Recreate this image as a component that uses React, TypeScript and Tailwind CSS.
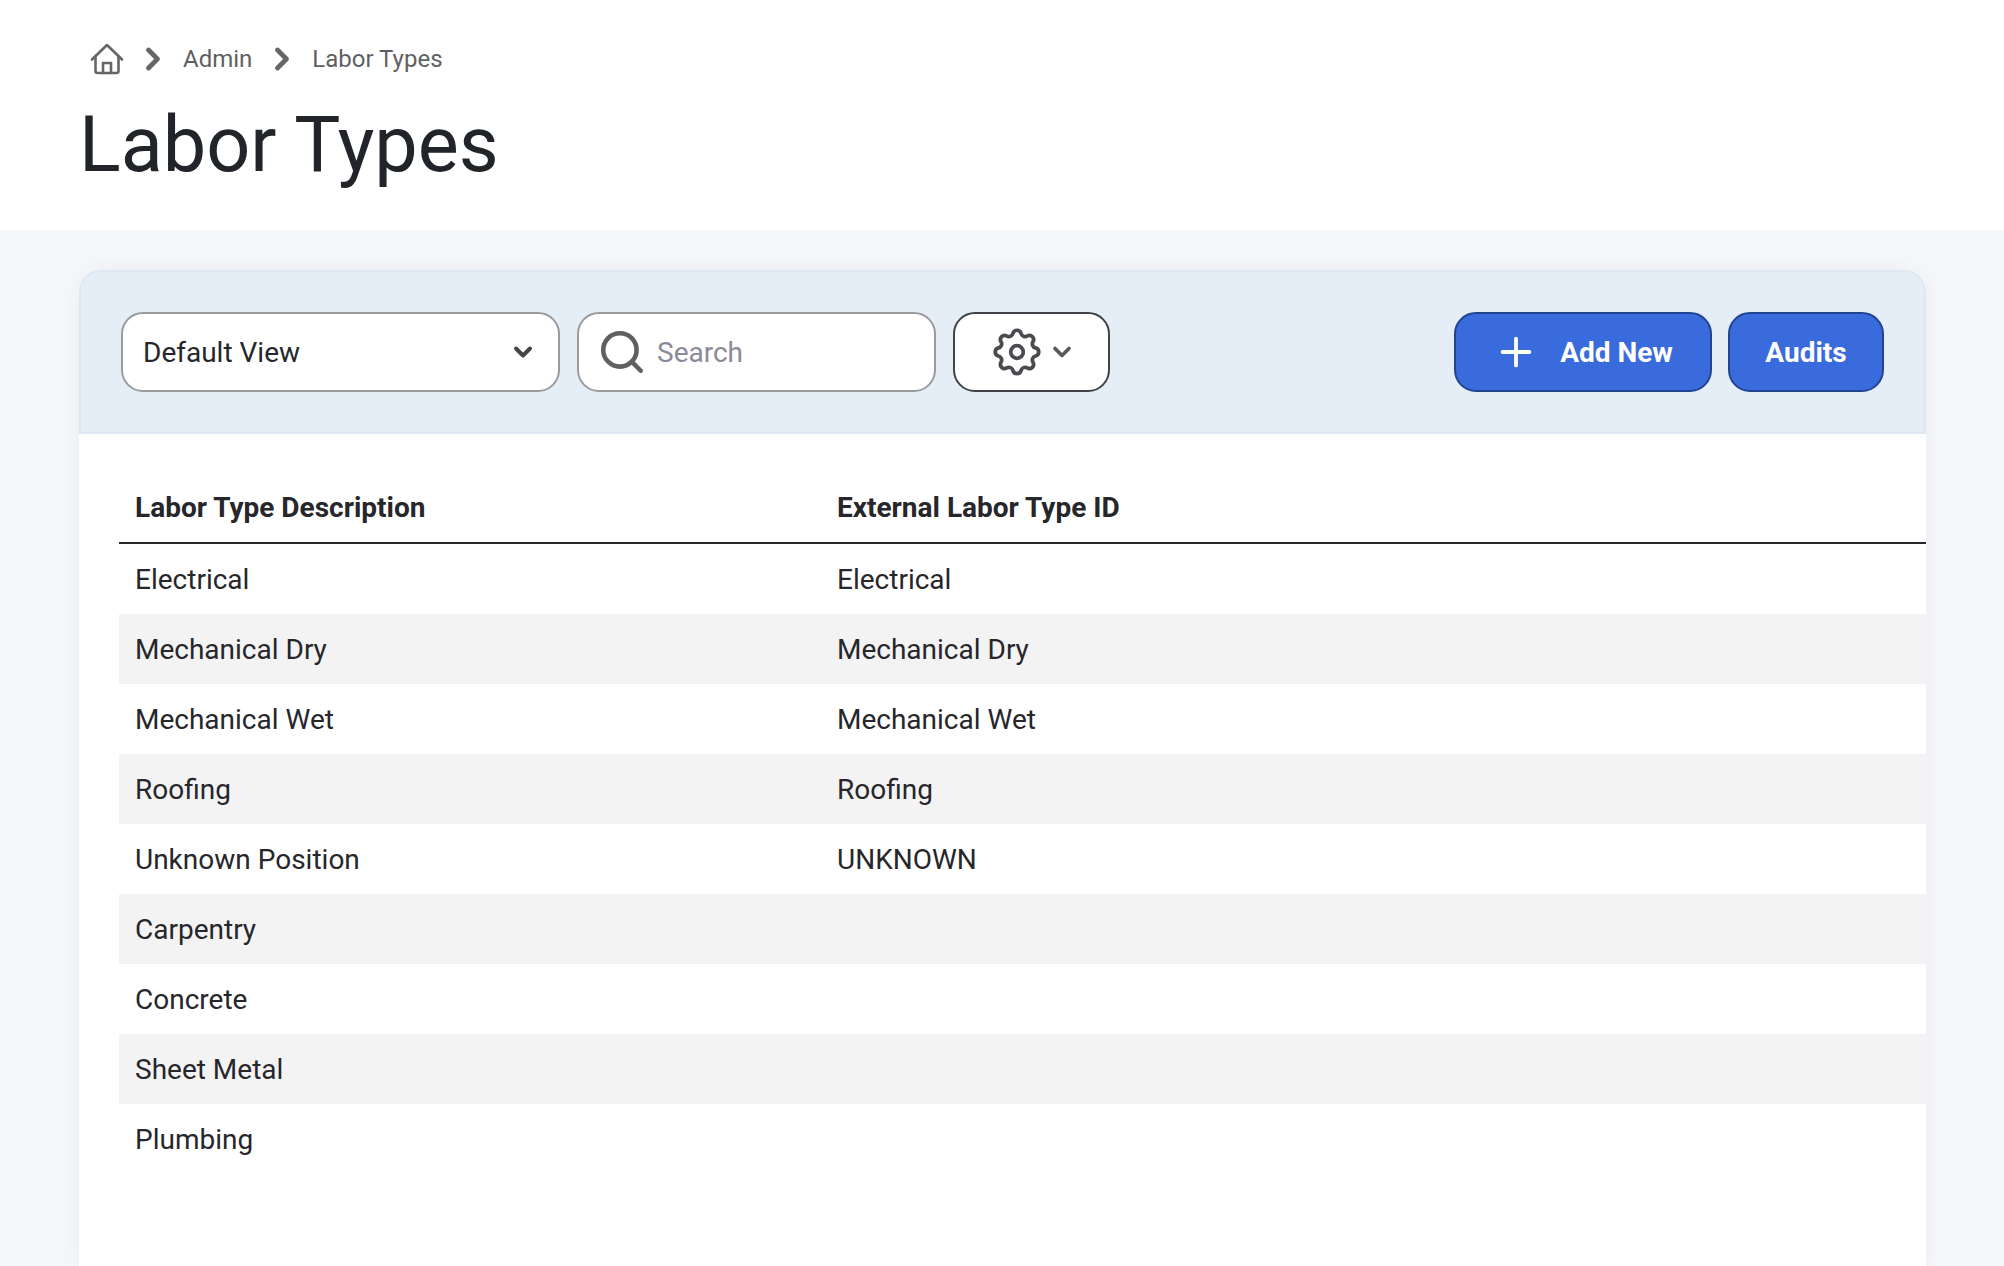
import { ChevronDown, ChevronRight, Plus, Search } from "lucide-react";

const rows = [
  ["Electrical", "Electrical"],
  ["Mechanical Dry", "Mechanical Dry"],
  ["Mechanical Wet", "Mechanical Wet"],
  ["Roofing", "Roofing"],
  ["Unknown Position", "UNKNOWN"],
  ["Carpentry", ""],
  ["Concrete", ""],
  ["Sheet Metal", ""],
  ["Plumbing", ""],
];

function HomeIcon() {
  return (
    <svg
      width="34"
      height="32"
      viewBox="0 0 34 32"
      fill="none"
      stroke="#666666"
      strokeWidth="2.6"
      strokeLinecap="round"
      strokeLinejoin="round"
    >
      <path d="M2 16.5 17 2l15 14.5" />
      <path d="M5.5 13.5V28a2 2 0 0 0 2 2h19a2 2 0 0 0 2-2V13.5" />
      <path d="M13 30V20h8v10" />
    </svg>
  );
}

function GearIcon() {
  return (
    <svg
      width="58"
      height="58"
      viewBox="0 0 24 24"
      fill="none"
      stroke="#4b4b4f"
      strokeWidth="1.55"
      strokeLinecap="round"
      strokeLinejoin="round"
    >
      <path d="M10.33 4.32c.43-1.76 2.92-1.76 3.34 0a1.72 1.72 0 0 0 2.57 1.07c1.54-.94 3.3.82 2.36 2.36a1.72 1.72 0 0 0 1.07 2.57c1.76.43 1.76 2.92 0 3.34a1.72 1.72 0 0 0-1.07 2.57c.94 1.54-.82 3.3-2.36 2.36a1.72 1.72 0 0 0-2.57 1.07c-.43 1.76-2.92 1.76-3.34 0a1.72 1.72 0 0 0-2.57-1.07c-1.54.94-3.3-.82-2.36-2.36a1.72 1.72 0 0 0-1.07-2.57c-1.76-.43-1.76-2.92 0-3.34a1.72 1.72 0 0 0 1.07-2.57c-.94-1.54.82-3.3 2.36-2.36 1 .6 2.3.07 2.57-1.07Z" />
      <circle cx="12" cy="12" r="2.6" />
    </svg>
  );
}

export default function App() {
  return (
    <div className="h-[1266px] overflow-hidden bg-[#f5f7fa] font-['Roboto',sans-serif]">
      <div className="h-[230px] bg-white pt-[38px] pl-[79px]">
        <div className="flex h-[41px] items-center pl-[11px] text-[24px] text-[#5f5f63]">
          <HomeIcon />
          <ChevronRight className="ml-[11px] size-[36px] text-[#666666]" strokeWidth={3.2} />
          <span className="ml-[12px]">Admin</span>
          <ChevronRight className="ml-[12px] size-[36px] text-[#666666]" strokeWidth={3.2} />
          <span className="ml-[12px]">Labor Types</span>
        </div>
        <h1 className="mt-[16px] text-[77.4px] leading-[100px] font-normal text-[#212529]">Labor Types</h1>
      </div>
      <div className="mt-10 mr-[78px] ml-[79px] h-[996px] rounded-t-[22px] bg-white shadow-[0_0_24px_rgba(0,0,0,0.05)]">
        <div className="flex h-[164px] items-center rounded-t-[22px] border-2 border-[#dfe7f3] bg-[#e5edf7] pr-[40px] pl-[40px]">
          <div className="flex h-20 w-[439px] items-center justify-between rounded-[22px] border-2 border-[#9a9a9e] bg-white pr-[21px] pl-[20px] text-[28px] text-[#26262b]">
            <span className="pt-[2px]">Default View</span>
            <ChevronDown className="size-[28px] text-[#444444]" strokeWidth={3.4} />
          </div>
          <div className="ml-[17px] flex h-20 w-[359px] items-center rounded-[22px] border-2 border-[#9a9a9e] bg-white pl-[18px] text-[28px] text-[#8a8a99]">
            <Search className="size-[50px] text-[#606060]" strokeWidth={2.2} />
            <span className="ml-[10px] pt-[2px]">Search</span>
          </div>
          <div className="ml-[17px] flex h-20 w-[157px] items-center justify-center gap-[2px] rounded-[22px] border-2 border-[#3f4247] bg-white">
            <GearIcon />
            <ChevronDown className="size-[28px] text-[#5a5a5a]" strokeWidth={3.2} />
          </div>
          <div className="ml-auto flex h-20 w-[258px] items-center justify-center gap-[21px] rounded-[22px] border-2 border-[#22448f] bg-[#3a6bdc] text-[28px] font-bold text-white">
            <Plus className="size-[46px]" strokeWidth={2} />
            <span className="pt-[2px]">Add New</span>
          </div>
          <div className="ml-4 flex h-20 w-[156px] items-center justify-center rounded-[22px] border-2 border-[#22448f] bg-[#3a6bdc] pt-[2px] text-[28px] font-bold text-white">
            Audits
          </div>
        </div>
        <div className="ml-10 pt-10 text-[28px] text-[#26262b]">
          <div className="flex h-[70px] items-center border-b-2 border-[#26262b] font-bold">
            <div className="w-[718px] pl-4">Labor Type Description</div>
            <div>External Labor Type ID</div>
          </div>
          {rows.map(([name, id], i) => (
            <div key={name} className={i % 2 === 1 ? "flex h-[70px] items-center bg-[#f3f3f4] pt-[2px]" : "flex h-[70px] items-center pt-[2px]"}>
              <div className="w-[718px] pl-4">{name}</div>
              <div>{id}</div>
            </div>
          ))}
        </div>
      </div>
    </div>
  );
}
